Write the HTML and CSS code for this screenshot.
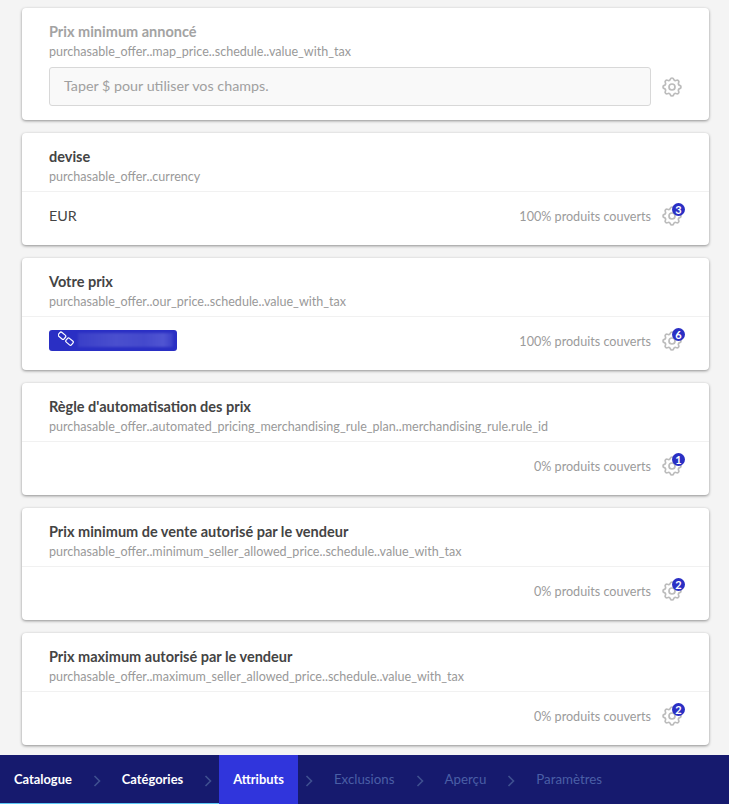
FILE: index.html
```html
<!DOCTYPE html>
<html lang="fr">
<head>
<meta charset="utf-8">
<title>Attributs</title>
<link rel="stylesheet" href="styles.css">
</head>
<body>
<svg class="defs" width="0" height="0" aria-hidden="true">
  <symbol id="gear" viewBox="2 2 20 20">
    <path d="M10.325 4.317c.426-1.756 2.924-1.756 3.35 0a1.724 1.724 0 002.573 1.066c1.543-.94 3.31.826 2.37 2.37a1.724 1.724 0 001.065 2.572c1.756.426 1.756 2.924 0 3.35a1.724 1.724 0 00-1.066 2.573c.94 1.543-.826 3.31-2.37 2.37a1.724 1.724 0 00-2.572 1.065c-.426 1.756-2.924 1.756-3.35 0a1.724 1.724 0 00-2.573-1.066c-1.543.94-3.31-.826-2.37-2.37a1.724 1.724 0 00-1.065-2.572c-1.756-.426-1.756-2.924 0-3.35a1.724 1.724 0 001.066-2.573c-.94-1.543.826-3.31 2.37-2.37.996.608 2.296.07 2.572-1.065z"/>
    <circle cx="12" cy="12" r="3"/>
  </symbol>
  <symbol id="chev" viewBox="0 0 8 12">
    <path d="M1.5 1l5 5-5 5"/>
  </symbol>
</svg>
<div class="page">
  <main class="list">
    <section class="card">
      <div class="head">
        <div class="title muted">Prix minimum annoncé</div>
        <div class="path">purchasable_offer..map_price..schedule..value_with_tax</div>
      </div>
      <div class="input-row">
        <div class="input">Taper $ pour utiliser vos champs.</div>
        <span class="gear"><svg class="gear-svg"><use href="#gear"/></svg></span>
      </div>
    </section>

    <section class="card">
      <div class="head sep">
        <div class="title">devise</div>
        <div class="path">purchasable_offer..currency</div>
      </div>
      <div class="row">
        <div class="value">EUR</div>
        <div class="cover">100% produits couverts</div>
        <span class="gear"><svg class="gear-svg"><use href="#gear"/></svg><b class="badge">3</b></span>
      </div>
    </section>

    <section class="card">
      <div class="head sep">
        <div class="title">Votre prix</div>
        <div class="path">purchasable_offer..our_price..schedule..value_with_tax</div>
      </div>
      <div class="row">
        <div class="value">
          <div class="pill">
            <svg class="link" viewBox="0 0 16 16"><rect x="0.4" y="2.2" width="7.2" height="5" rx="1.5" transform="rotate(40 4 4.7)"/><rect x="7.9" y="8.1" width="7.2" height="5" rx="1.5" transform="rotate(40 11.5 10.6)"/></svg>
            <span class="blur"></span>
          </div>
        </div>
        <div class="cover">100% produits couverts</div>
        <span class="gear"><svg class="gear-svg"><use href="#gear"/></svg><b class="badge">6</b></span>
      </div>
    </section>

    <section class="card">
      <div class="head sep">
        <div class="title">Règle d'automatisation des prix</div>
        <div class="path">purchasable_offer..automated_pricing_merchandising_rule_plan..merchandising_rule.rule_id</div>
      </div>
      <div class="row">
        <div class="value"></div>
        <div class="cover">0% produits couverts</div>
        <span class="gear"><svg class="gear-svg"><use href="#gear"/></svg><b class="badge">1</b></span>
      </div>
    </section>

    <section class="card">
      <div class="head sep">
        <div class="title">Prix minimum de vente autorisé par le vendeur</div>
        <div class="path">purchasable_offer..minimum_seller_allowed_price..schedule..value_with_tax</div>
      </div>
      <div class="row">
        <div class="value"></div>
        <div class="cover">0% produits couverts</div>
        <span class="gear"><svg class="gear-svg"><use href="#gear"/></svg><b class="badge">2</b></span>
      </div>
    </section>

    <section class="card">
      <div class="head sep">
        <div class="title">Prix maximum autorisé par le vendeur</div>
        <div class="path">purchasable_offer..maximum_seller_allowed_price..schedule..value_with_tax</div>
      </div>
      <div class="row">
        <div class="value"></div>
        <div class="cover">0% produits couverts</div>
        <span class="gear"><svg class="gear-svg"><use href="#gear"/></svg><b class="badge">2</b></span>
      </div>
    </section>
  </main>

  <nav class="steps">
    <a class="step done">Catalogue</a>
    <span class="sep-chev done"><svg class="chev"><use href="#chev"/></svg></span>
    <a class="step done">Catégories</a>
    <span class="sep-chev done"><svg class="chev"><use href="#chev"/></svg></span>
    <a class="step current">Attributs</a>
    <span class="sep-chev"><svg class="chev"><use href="#chev"/></svg></span>
    <a class="step">Exclusions</a>
    <span class="sep-chev"><svg class="chev"><use href="#chev"/></svg></span>
    <a class="step">Aperçu</a>
    <span class="sep-chev"><svg class="chev"><use href="#chev"/></svg></span>
    <a class="step">Paramètres</a>
  </nav>
</div>
</body>
</html>
```

FILE: styles.css
```css
* { box-sizing: border-box; }

html, body {
  margin: 0;
  height: 100%;
}

body {
  background: #f4f4f4;
  font-family: Lato, "Open Sans", sans-serif;
  color: #444;
  overflow: hidden;
}

.defs { position: absolute; }

.page {
  display: flex;
  flex-direction: column;
  height: 804px;
}

.list {
  flex: 1;
  display: flex;
  flex-direction: column;
  gap: 13px;
  padding: 8px 20px 0 22px;
}

.card {
  height: 112px;
  background: #fff;
  border-radius: 4px;
  box-shadow: 0 1px 3px rgba(0, 0, 0, 0.42);
  display: flex;
  flex-direction: column;
}

.head {
  height: 59px;
  padding: 15px 27px 0;
}

.head.sep {
  border-bottom: 1px solid #f1f1f1;
}

.title {
  font-size: 14.5px;
  font-weight: 700;
  line-height: 18px;
  color: #444;
}

.title.muted { color: #a3a3a3; }

.path {
  font-size: 12.55px;
  line-height: 18px;
  margin-top: 2px;
  color: #999;
}

.input-row {
  display: flex;
  align-items: center;
  padding: 0 27px;
}

.input {
  flex: 1;
  height: 39px;
  display: flex;
  align-items: center;
  padding: 0 14px 2px;
  background: #f9f9f9;
  border: 1px solid #d8d8d8;
  border-radius: 3px;
  font-size: 14.3px;
  color: #a0a0a0;
}

.gear {
  position: relative;
  flex: none;
  width: 20px;
  height: 20px;
  margin-left: 11px;
}

.gear-svg {
  display: block;
  width: 20px;
  height: 20px;
  fill: none;
  stroke: #bcbcbc;
  stroke-width: 1.7;
}

.badge {
  position: absolute;
  top: -3px;
  right: -3px;
  width: 13px;
  height: 13px;
  border-radius: 50%;
  background: #2a2fc4;
  color: #fff;
  font-size: 11px;
  font-weight: 700;
  line-height: 13px;
  text-align: center;
}

.row {
  flex: 1;
  display: flex;
  align-items: center;
  padding: 0 27px 5px;
}

.value {
  flex: 1;
  margin-bottom: 2px;
  font-size: 14.3px;
  color: #444;
}

.cover {
  font-size: 12.6px;
  color: #9b9b9b;
}

.pill {
  display: flex;
  align-items: center;
  width: 128px;
  height: 21px;
  padding: 0 4px 0 9px;
  background: #2a2fc4;
  border-radius: 3px;
}

.link {
  flex: none;
  width: 16px;
  height: 16px;
  margin-top: -3px;
  fill: none;
  stroke: #fff;
  stroke-width: 1.2;
}

.blur {
  flex: 1;
  height: 14px;
  margin-left: 4px;
  background: linear-gradient(90deg, #3a3fc8, #4a4fce 40%, #4449cc 70%, #5055d2 90%, #3a3fc8);
  filter: blur(1px);
}

.steps {
  flex: none;
  display: flex;
  align-items: stretch;
  height: 49px;
  background: #161a6e;
  font-size: 13.3px;
}

.step {
  display: flex;
  align-items: center;
  padding: 0 14px 1px;
  color: #4a5fa6;
  font-weight: 400;
}

.step.done {
  color: #fff;
  font-size: 12.9px;
  font-weight: 700;
  box-shadow: inset 0 -1px 0 #5cc8f5;
}

.step.current {
  color: #fff;
  font-size: 12.9px;
  font-weight: 700;
  background: #3035dc;
}

.sep-chev {
  flex: none;
  width: 22px;
  display: flex;
  align-items: center;
  justify-content: center;
}

.sep-chev.done { box-shadow: inset 0 -1px 0 #5cc8f5; }

.chev {
  width: 8px;
  height: 12px;
  margin-top: 3px;
  fill: none;
  stroke: #3f5090;
  stroke-width: 1.6;
}
```
